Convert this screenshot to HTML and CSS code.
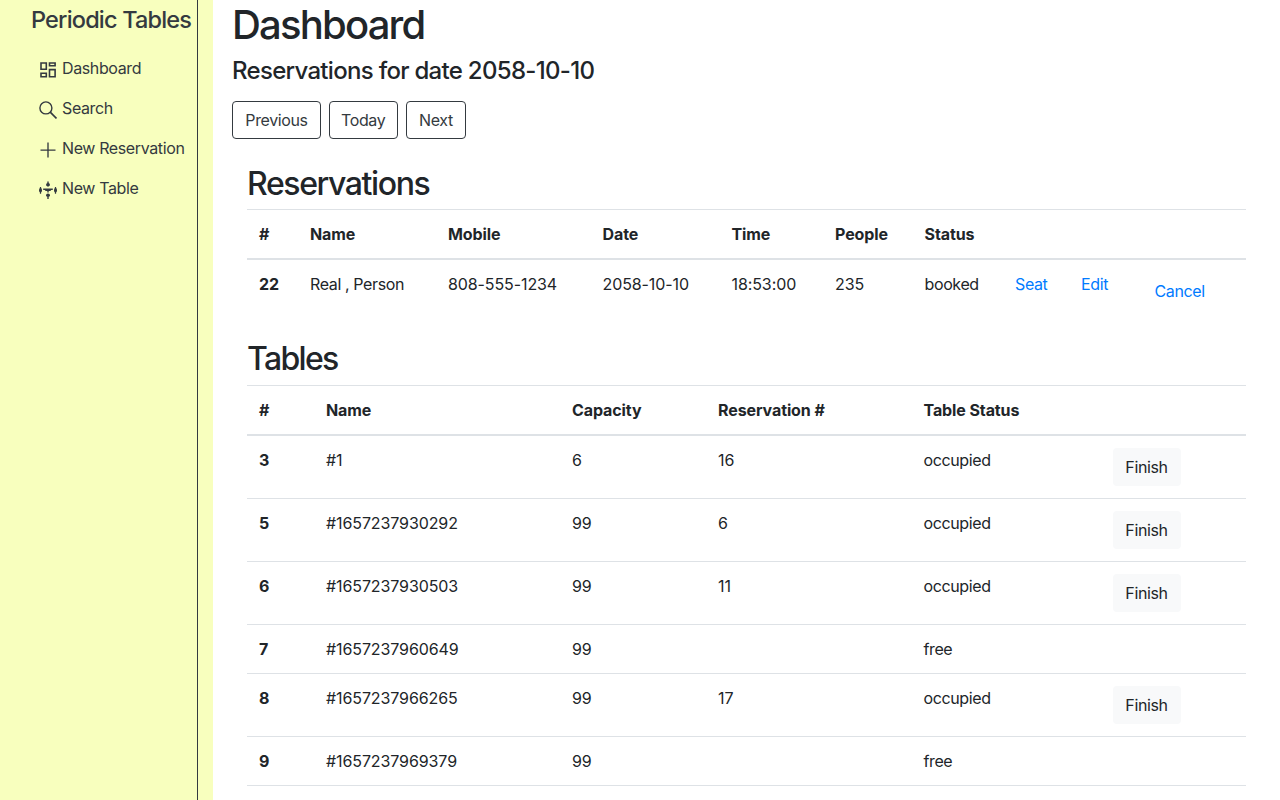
FILE: index.html
```html
<!DOCTYPE html>
<html lang="en">
<head>
<meta charset="utf-8">
<title>Periodic Tables</title>
<link rel="stylesheet" href="styles.css">
</head>
<body>
<div class="layout">
  <aside class="side">
    <nav class="menu">
      <h4 class="brand">Periodic Tables</h4>
      <a class="nav-link" href="#"><svg class="icon" viewBox="0 0 18 18"><path d="M2 2h5.3v6.2H2zM10.5 2h5.6v2.8h-5.6zM2 12.2h5.3v3.6H2zM10.5 8.6h5.6v7.2h-5.6z" fill="none" stroke="currentColor" stroke-width="1.6"/></svg><span class="label">Dashboard</span></a>
      <a class="nav-link" href="#"><svg class="icon" viewBox="0 0 18 18"><circle cx="6.9" cy="6.9" r="6" fill="none" stroke="currentColor" stroke-width="1.4"/><path d="M11.2 11.2l6.3 6.2" fill="none" stroke="currentColor" stroke-width="1.7"/></svg><span class="label">Search</span></a>
      <a class="nav-link" href="#"><svg class="icon" viewBox="0 0 18 18"><path d="M1.5 9.1h15M9 1.6v15" fill="none" stroke="currentColor" stroke-width="1.35"/></svg><span class="label">New Reservation</span></a>
      <a class="nav-link" href="#"><svg class="icon" viewBox="0 0 18 18"><g fill="currentColor"><path d="M4.2 7.6h9.6v1.5h-1.6l-.8.9H6.6l-.8-.9H4.2z"/><ellipse cx="9" cy="3.7" rx="2" ry="1.6"/><path d="M8.3.4h1.4v5.2H8.3zM8.3 9.8h1.4v1.8H8.3zM8.3 13h1.4v4.9H8.3z"/><ellipse cx="9" cy="14.2" rx="2" ry="1.6"/><ellipse cx="1.5" cy="9.3" rx="1.5" ry="2.3"/><ellipse cx="16.5" cy="9.3" rx="1.5" ry="2.3"/><path d="M.9 5.9h1.2v6.8H.9zM15.9 5.9h1.2v6.8h-1.2z"/></g></svg><span class="label">New Table</span></a>
    </nav>
  </aside>
  <main class="content">
    <h1 class="title">Dashboard</h1>
    <h4 class="subtitle">Reservations for date 2058-10-10</h4>
    <div class="actions">
      <button class="btn outline prev">Previous</button>
      <button class="btn outline today">Today</button>
      <button class="btn outline next">Next</button>
    </div>
    <section class="lists">
      <h2 class="heading">Reservations</h2>
      <table class="table">
        <colgroup><col class="r-id"><col class="r-name"><col class="r-mobile"><col class="r-date"><col class="r-time"><col class="r-people"><col class="r-status"><col class="r-seat"><col class="r-edit"><col class="r-cancel"></colgroup>
        <thead><tr><th>#</th><th>Name</th><th>Mobile</th><th>Date</th><th>Time</th><th>People</th><th>Status</th><th></th><th></th><th></th></tr></thead>
        <tbody><tr><th>22</th><td>Real , Person</td><td class="num">808-555-1234</td><td class="num">2058-10-10</td><td class="num">18:53:00</td><td class="num">235</td><td>booked</td><td><a class="link" href="#">Seat</a></td><td><a class="link" href="#">Edit</a></td><td><button class="btn text">Cancel</button></td></tr></tbody>
      </table>
      <h2 class="heading tables">Tables</h2>
      <table class="table">
        <colgroup><col class="t-id"><col class="t-name"><col class="t-capacity"><col class="t-reservation"><col class="t-status"><col class="t-action"></colgroup>
        <thead><tr><th>#</th><th>Name</th><th>Capacity</th><th>Reservation #</th><th>Table Status</th><th></th></tr></thead>
        <tbody>
          <tr><th>3</th><td class="num">#1</td><td class="num">6</td><td class="num">16</td><td>occupied</td><td><button class="btn light">Finish</button></td></tr>
          <tr><th>5</th><td class="num">#1657237930292</td><td class="num">99</td><td class="num">6</td><td>occupied</td><td><button class="btn light">Finish</button></td></tr>
          <tr><th>6</th><td class="num">#1657237930503</td><td class="num">99</td><td class="num">11</td><td>occupied</td><td><button class="btn light">Finish</button></td></tr>
          <tr><th>7</th><td class="num">#1657237960649</td><td class="num">99</td><td></td><td>free</td><td></td></tr>
          <tr><th>8</th><td class="num">#1657237966265</td><td class="num">99</td><td class="num">17</td><td>occupied</td><td><button class="btn light">Finish</button></td></tr>
          <tr class="last"><th>9</th><td class="num">#1657237969379</td><td class="num">99</td><td></td><td>free</td><td></td></tr>
        </tbody>
      </table>
    </section>
  </main>
</div>
</body>
</html>
```
FILE: styles.css
```css
* { box-sizing: border-box; }
body {
  margin: 0;
  height: 800px;
  overflow: hidden;
  background: #fff;
  color: #212529;
  font: 400 16px/24px Inter, "Liberation Sans", sans-serif;
  letter-spacing: -0.38px;
}
h1, h2, h4 { margin: 0 0 8px; font-weight: 500; line-height: 1.2; white-space: nowrap; }
.layout { display: flex; height: 800px; }
.side { flex: none; width: 213px; background: #f8ffbe; color: #343a40; }
.menu { width: 198px; height: 100%; padding: 5px 0 0 31px; border-right: 1px solid #343a40; }
.brand { margin-bottom: 14px; font-size: 23.5px; line-height: 29px; letter-spacing: -0.82px; }
.nav-link { display: flex; height: 40px; padding: 8px; gap: 5px; color: inherit; text-decoration: none; white-space: nowrap; }
.icon { flex: none; width: 18px; height: 18px; margin-top: 5px; }
.content { flex: 1; min-width: 0; padding: 1px 34px 0 19px; }
.title { font-size: 40px; font-weight: 550; letter-spacing: -1.8px; }
.subtitle { font-size: 24px; font-weight: 530; letter-spacing: -0.7px; }
.actions { display: flex; gap: 8px; padding-top: 7px; }
.btn { height: 38px; padding: 6px 12px; border: 1px solid transparent; border-radius: 4px; background: transparent; color: #212529; font: inherit; letter-spacing: inherit; white-space: nowrap; }
.outline { border-color: #343a40; color: #343a40; }
.prev { width: 89px; }
.today { width: 69px; padding-left: 11px; }
.next { width: 60px; }
.light { width: 68px; padding-left: 11px; background: #f8f9fa; }
.text { padding-left: 11.5px; color: #007bff; }
.link { color: #007bff; text-decoration: none; }
.lists { padding: 26px 0 0 15px; }
.heading { margin-bottom: 6px; font-size: 32px; font-weight: 540; letter-spacing: -1.4px; }
.tables { padding-top: 2px; letter-spacing: -1.65px; }
.table { width: 999px; margin-bottom: 16px; table-layout: fixed; border-collapse: collapse; }
.table th, .table td { padding: 12px; border-top: 1px solid #dee2e6; text-align: left; vertical-align: top; white-space: nowrap; }
.table th { font-weight: 700; letter-spacing: -0.1px; }
.table .num { letter-spacing: -0.1px; }
.table thead th { border-bottom: 2px solid #dee2e6; }
.table .last > * { border-bottom: 1px solid #dee2e6; }
.table td .btn { display: block; }
.r-id { width: 51px; }
.r-name { width: 138px; }
.r-mobile { width: 154.5px; }
.r-date { width: 129px; }
.r-time { width: 103.5px; }
.r-people { width: 89.5px; }
.r-status { width: 90.5px; }
.r-seat { width: 66px; }
.r-edit { width: 61px; }
.r-cancel { width: 116px; }
.t-id { width: 67px; }
.t-name { width: 246px; }
.t-capacity { width: 146px; }
.t-reservation { width: 205.5px; }
.t-status { width: 189.5px; }
.t-action { width: 145px; }
```
